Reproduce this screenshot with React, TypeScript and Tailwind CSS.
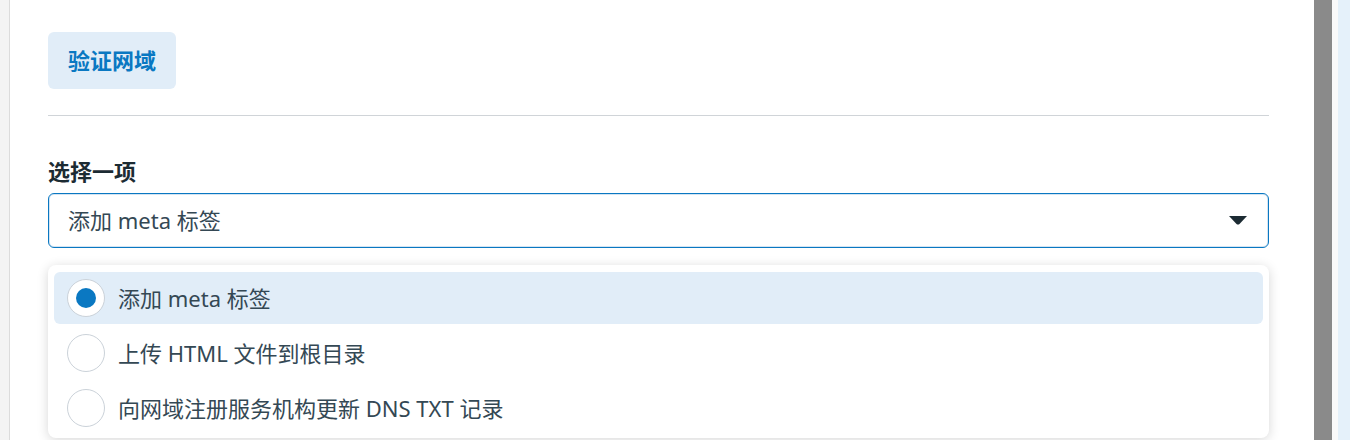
const options = [
  "添加 meta 标签",
  "上传 HTML 文件到根目录",
  "向网域注册服务机构更新 DNS TXT 记录",
];

const font = {
  fontFamily: '"Noto Sans", "Noto Sans CJK SC", sans-serif',
};

function Radio({ checked }: { checked: boolean }) {
  return (
    <span className="flex h-[38px] w-[38px] shrink-0 items-center justify-center rounded-full border border-[#cbd2d9] bg-white">
      {checked && <span className="h-[20px] w-[20px] rounded-full bg-[#0a78c2]" />}
    </span>
  );
}

export default function App() {
  const selected = 0;

  return (
    <div className="flex h-[440px] w-[1350px] overflow-hidden bg-white" style={font}>
      {/* left edge */}
      <div className="w-[10px] shrink-0 border-r border-[#dcdcdc] bg-[#f4f4f4]" />

      {/* main panel */}
      <div className="w-[1304px] shrink-0 bg-white pl-[38px] pt-[32px]">
        <div className="w-[1221px]">
          <button className="h-[57px] w-[128px] rounded-[6px] bg-[#e1edf8] text-[22px] font-bold text-[#0a78c2]">
            验证网域
          </button>

          <div className="mt-[26px] h-px bg-[#d0d4d8]" />

          <div className="mt-[42px] text-[22px] leading-[26px] font-bold text-[#1c2b33]">
            选择一项
          </div>

          <div className="mt-[9px] flex h-[55px] items-center justify-between rounded-[6px] border border-[#0a78c2] pl-[19px] pr-[21px] shadow-[inset_0_0_0_1px_#d4e4f2]">
            <span className="text-[22px] text-[#344854]">{options[selected]}</span>
            <svg width="18" height="9" viewBox="0 0 18 9">
              <path d="M0 0 H18 L10.5 8 Q9 9 7.5 8 Z" fill="#1c2b33" />
            </svg>
          </div>

          <div className="mt-[17px] flex flex-col gap-[3px] rounded-[8px] bg-white px-[6px] pt-[7px] pb-[4px] shadow-[0_2px_12px_rgba(0,0,0,0.16)]">
            {options.map((opt, i) => (
              <div
                key={opt}
                className={
                  i === selected
                    ? "flex h-[52px] items-center gap-[13px] rounded-[6px] bg-[#e1edf8] pl-[13px]"
                    : "flex h-[52px] items-center gap-[13px] rounded-[6px] pl-[13px]"
                }
              >
                <Radio checked={i === selected} />
                <span className="text-[22px] text-[#344854]">{opt}</span>
              </div>
            ))}
          </div>
        </div>
      </div>

      {/* scrollbar + side */}
      <div className="w-[18px] shrink-0 bg-[#8a8a8a]" />
      <div className="w-[6px] shrink-0 bg-[#fafafa]" />
      <div className="flex-1 bg-[#e5f1fa]" />
    </div>
  );
}
